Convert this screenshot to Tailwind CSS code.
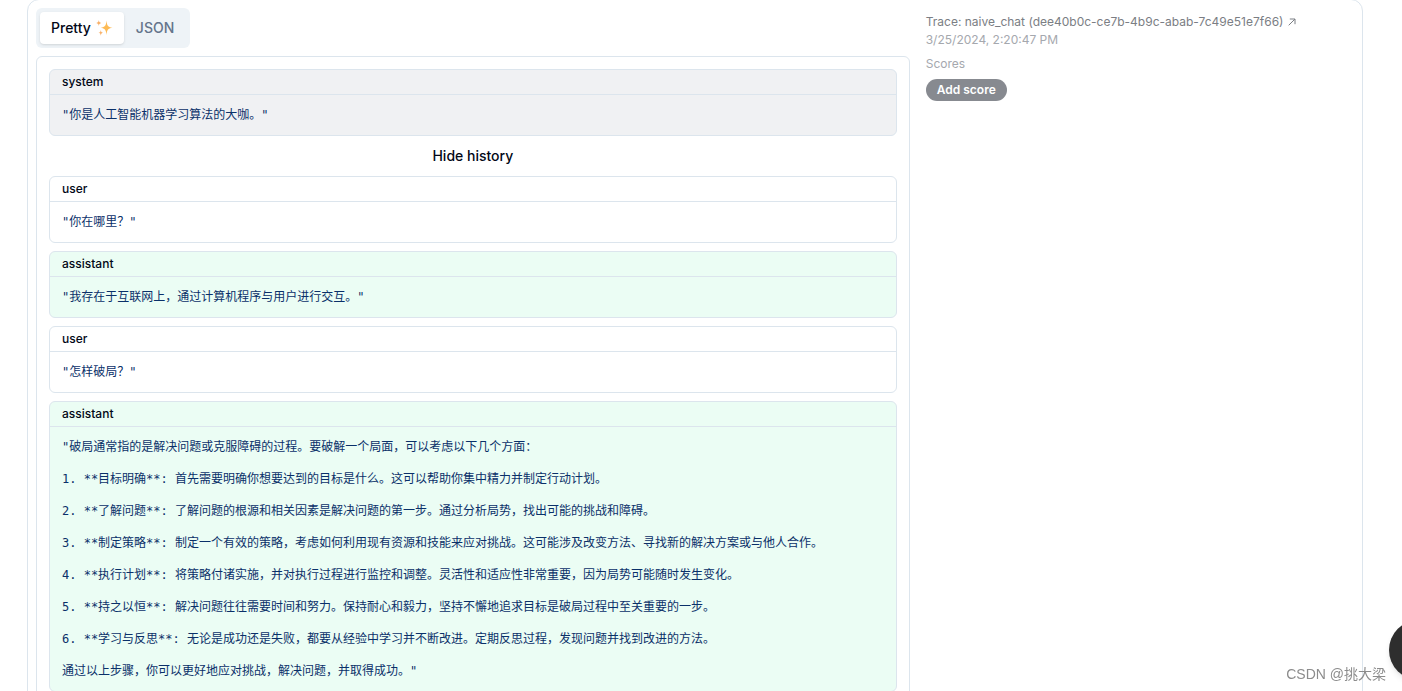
<!DOCTYPE html>
<html lang="en">
<head>
<meta charset="utf-8">
<meta name="viewport" content="width=device-width, initial-scale=1">
<title>Trace: naive_chat</title>
<script src="https://cdn.jsdelivr.net/npm/@tailwindcss/browser@4"></script>
</head>
<body class="h-screen overflow-hidden bg-white font-['Inter','Noto_Sans_CJK_SC',sans-serif] text-[#020817]">
<main class="-mt-px mr-[39px] ml-[27px] grid grid-cols-[2.04fr_1fr] gap-4 rounded-xl border border-[#dce5ed] p-2">
  <section>
    <div role="tablist" class="inline-flex h-10 items-center rounded-md bg-[#eef3f7] p-1 align-top text-sm font-medium">
      <button role="tab" aria-selected="true" class="flex h-8 items-center gap-1 rounded-sm bg-white px-[11px] shadow-sm">Pretty
        <svg class="size-[18px]" viewBox="0 0 18 18" aria-hidden="true">
          <path fill="#fdbb55" d="M11.5 1.5C12.1 6.8 12.7 7.9 17.5 8.8C12.7 9.7 12.1 10.8 11.5 16C10.9 10.8 10.3 9.7 5.5 8.8C10.3 7.9 10.9 6.8 11.5 1.5Z"/>
          <path fill="#f8b068" d="M3.8 1C4.1 3 4.5 3.5 6.3 4C4.5 4.5 4.1 5 3.8 7C3.5 5 3.1 4.5 1.3 4C3.1 3.5 3.5 3 3.8 1ZM5.8 11C6.1 13 6.5 13.4 8.2 13.8C6.5 14.2 6.1 14.7 5.8 16.7C5.5 14.7 5.1 14.2 3.4 13.8C5.1 13.4 5.5 13 5.8 11Z"/>
        </svg>
      </button>
      <button role="tab" aria-selected="false" class="h-8 px-3 text-[#64748b]">JSON</button>
    </div>

    <div class="mt-2 flex flex-col gap-2 rounded-md border border-[#dce5ed] p-3">
      <div>
        <article class="rounded-md border border-[#dce5ed] bg-[#f0f1f3]">
          <h2 class="border-b border-[#dce5ed] px-3 py-1 text-xs font-medium">system</h2>
          <p class="p-3 font-['DejaVu_Sans_Mono','Noto_Sans_CJK_SC',monospace] text-xs text-[#0a3069]" lang="zh-CN">"你是人工智能机器学习算法的大咖。"</p>
        </article>
        <button class="-mb-2 block h-10 w-full text-center text-sm font-medium">Hide history</button>
      </div>
      <article class="rounded-md border border-[#dce5ed]">
        <h2 class="border-b border-[#dce5ed] px-3 py-1 text-xs font-medium">user</h2>
        <p class="p-3 font-['DejaVu_Sans_Mono','Noto_Sans_CJK_SC',monospace] text-xs text-[#0a3069]" lang="zh-CN">"你在哪里？"</p>
      </article>
      <article class="rounded-md border border-[#dce5ed] bg-[#ebfdf4]">
        <h2 class="border-b border-[#dce5ed] px-3 py-1 text-xs font-medium">assistant</h2>
        <p class="p-3 font-['DejaVu_Sans_Mono','Noto_Sans_CJK_SC',monospace] text-xs text-[#0a3069]" lang="zh-CN">"我存在于互联网上，通过计算机程序与用户进行交互。"</p>
      </article>
      <article class="rounded-md border border-[#dce5ed]">
        <h2 class="border-b border-[#dce5ed] px-3 py-1 text-xs font-medium">user</h2>
        <p class="p-3 font-['DejaVu_Sans_Mono','Noto_Sans_CJK_SC',monospace] text-xs text-[#0a3069]" lang="zh-CN">"怎样破局？"</p>
      </article>
      <article class="rounded-md border border-[#dce5ed] bg-[#ebfdf4]">
        <h2 class="border-b border-[#dce5ed] px-3 py-1 text-xs font-medium">assistant</h2>
        <div class="flex flex-col gap-4 p-3 font-['DejaVu_Sans_Mono','Noto_Sans_CJK_SC',monospace] text-xs text-[#0a3069]" lang="zh-CN">
          <p>"破局通常指的是解决问题或克服障碍的过程。要破解一个局面，可以考虑以下几个方面：</p>
          <p>1. **目标明确**: 首先需要明确你想要达到的目标是什么。这可以帮助你集中精力并制定行动计划。</p>
          <p>2. **了解问题**: 了解问题的根源和相关因素是解决问题的第一步。通过分析局势，找出可能的挑战和障碍。</p>
          <p>3. **制定策略**: 制定一个有效的策略，考虑如何利用现有资源和技能来应对挑战。这可能涉及改变方法、寻找新的解决方案或与他人合作。</p>
          <p>4. **执行计划**: 将策略付诸实施，并对执行过程进行监控和调整。灵活性和适应性非常重要，因为局势可能随时发生变化。</p>
          <p>5. **持之以恒**: 解决问题往往需要时间和努力。保持耐心和毅力，坚持不懈地追求目标是破局过程中至关重要的一步。</p>
          <p>6. **学习与反思**: 无论是成功还是失败，都要从经验中学习并不断改进。定期反思过程，发现问题并找到改进的方法。</p>
          <p>通过以上步骤，你可以更好地应对挑战，解决问题，并取得成功。"</p>
        </div>
      </article>
    </div>
  </section>

  <aside class="pt-[5px] text-xs text-[#a5a8ae]">
    <a href="#trace" class="flex h-[18px] items-center gap-[5px] whitespace-nowrap text-[#7b7e84]">Trace: naive_chat (dee40b0c-ce7b-4b9c-abab-7c49e51e7f66)
      <svg class="size-2" viewBox="0 0 8 8" fill="none" stroke="currentColor" stroke-width="1" aria-hidden="true"><path d="M0.7 7.3L7 1M1.8 1H7V6.2"/></svg>
    </a>
    <p class="leading-[18px]">3/25/2024, 2:20:47 PM</p>
    <h3 class="mt-[7px]">Scores</h3>
    <button class="mt-[7px] block h-[22px] rounded-full bg-[#878a90] px-[11px] font-semibold text-white">Add score</button>
  </aside>
</main>

<div class="fixed right-4 bottom-[5px] font-['Liberation_Sans','Noto_Sans_CJK_SC',sans-serif] text-sm leading-6 text-[#8c8c8c]" lang="zh-CN">CSDN @挑大梁</div>
<button aria-label="Help" class="fixed -right-[47px] bottom-[11px] size-[60px] rounded-full bg-[#2e2e2e] shadow-md"></button>
</body>
</html>
